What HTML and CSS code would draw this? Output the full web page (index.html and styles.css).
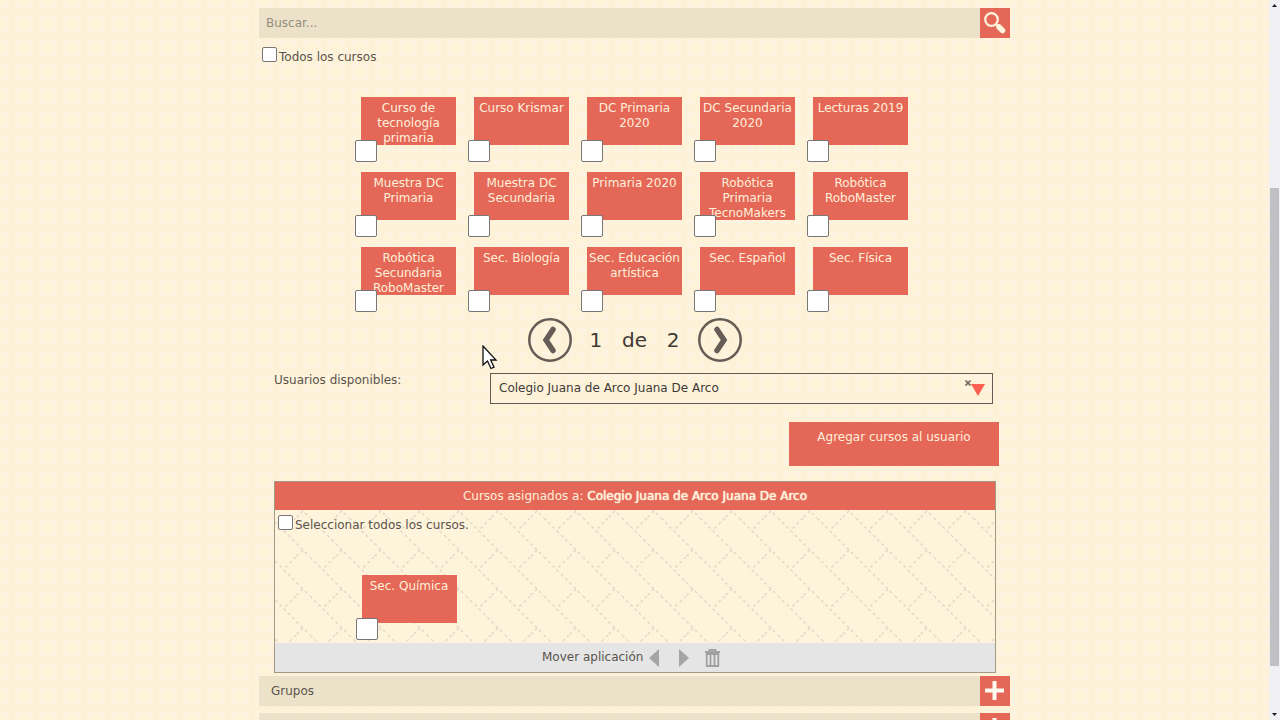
FILE: index.html
```html
<!DOCTYPE html>
<html lang="es">
<head>
<meta charset="utf-8">
<title>Cursos</title>
<link rel="stylesheet" href="styles.css">
</head>
<body>
<main class="page">
  <div class="content">
    <form class="bar search">
      <input class="search-input" type="text" placeholder="Buscar..." aria-label="Buscar">
      <button class="square" type="button" aria-label="Buscar">
        <svg width="30" height="30" viewBox="0 0 30 30"><circle cx="11.500" cy="11.500" r="6.300" fill="none" stroke="#fff4dc" stroke-width="2.200"/><path d="M16 16l3 3" stroke="#fff4dc" stroke-width="2.200"/><path d="M19 19l3.500 3.500" stroke="#fff4dc" stroke-width="5.500" stroke-linecap="round"/></svg>
      </button>
    </form>
    <label class="check all"><input type="checkbox" class="box">Todos los cursos</label>

    <div class="courses">
      <label class="course">Curso de tecnología primaria<input type="checkbox" class="box big"></label>
      <label class="course">Curso Krismar<input type="checkbox" class="box big"></label>
      <label class="course">DC Primaria 2020<input type="checkbox" class="box big"></label>
      <label class="course">DC Secundaria 2020<input type="checkbox" class="box big"></label>
      <label class="course">Lecturas 2019<input type="checkbox" class="box big"></label>
      <label class="course">Muestra DC Primaria<input type="checkbox" class="box big"></label>
      <label class="course">Muestra DC Secundaria<input type="checkbox" class="box big"></label>
      <label class="course">Primaria 2020<input type="checkbox" class="box big"></label>
      <label class="course">Robótica Primaria TecnoMakers<input type="checkbox" class="box big"></label>
      <label class="course">Robótica RoboMaster<input type="checkbox" class="box big"></label>
      <label class="course">Robótica Secundaria RoboMaster<input type="checkbox" class="box big"></label>
      <label class="course">Sec. Biología<input type="checkbox" class="box big"></label>
      <label class="course">Sec. Educación artística<input type="checkbox" class="box big"></label>
      <label class="course">Sec. Español<input type="checkbox" class="box big"></label>
      <label class="course">Sec. Física<input type="checkbox" class="box big"></label>
    </div>

    <nav class="pager" aria-label="Páginas">
      <button type="button" class="round" aria-label="Anterior">
        <svg width="44" height="44" viewBox="0 0 44 44" fill="none" stroke="#655c56"><circle cx="22" cy="22" r="20.700" stroke-width="2.500"/><path d="M25 11.500L18 22l7 10.500" stroke-width="5.500" stroke-linecap="round"/></svg>
      </button>
      <div class="pages"><span>1</span><span>de</span><span>2</span></div>
      <button type="button" class="round" aria-label="Siguiente">
        <svg width="44" height="44" viewBox="0 0 44 44" fill="none" stroke="#655c56"><circle cx="22" cy="22" r="20.700" stroke-width="2.500"/><path d="M19 11.500L26 22l-7 10.500" stroke-width="5.500" stroke-linecap="round"/></svg>
      </button>
    </nav>

    <div class="user-row">
      <label for="user">Usuarios disponibles:</label>
      <div class="select-wrap">
        <select id="user"><option>Colegio Juana de Arco Juana De Arco</option></select>
        <button type="button" class="clear" aria-label="Quitar"><svg width="6" height="6" viewBox="0 0 6 6"><path d="M.5 .5l5 5M5.500 .5l-5 5" stroke="#766d63" stroke-width="1.700"/></svg></button>
        <svg class="caret" width="14" height="12" viewBox="0 0 14 12"><path d="M0 0h14L7 12z" fill="#fb6050"/></svg>
      </div>
    </div>

    <button type="button" class="add">Agregar cursos al usuario</button>

    <section class="panel">
      <h2 class="panel-head">Cursos asignados a: <span class="strong">Colegio Juana de Arco Juana De Arco</span></h2>
      <div class="panel-body">
        <svg class="weave" width="100%" height="100%" aria-hidden="true">
          <defs><pattern id="weave" width="39" height="39" x="35" y="8" patternUnits="userSpaceOnUse"><path d="M0 0L39 39M32 32L25 39M25 0L12 13" fill="none" stroke="#e2d7c2" stroke-width="1.400" stroke-dasharray="3 3"/></pattern></defs>
          <rect width="100%" height="100%" fill="url(#weave)"/>
        </svg>
        <label class="check"><input type="checkbox" class="box">Seleccionar todos los cursos.</label>
        <div class="courses assigned">
          <label class="course">Sec. Química<input type="checkbox" class="box big"></label>
        </div>
      </div>
      <div class="panel-foot">
        <span>Mover aplicación</span>
        <button type="button" aria-label="Mover a la izquierda"><svg width="10" height="18" viewBox="0 0 10 18"><path d="M10 0v18L0 9z" fill="#a5a5a5"/></svg></button>
        <button type="button" aria-label="Mover a la derecha"><svg width="10" height="18" viewBox="0 0 10 18"><path d="M0 0v18l10-9z" fill="#a5a5a5"/></svg></button>
        <button type="button" aria-label="Eliminar"><svg width="15" height="18" viewBox="0 0 15 18" fill="none" stroke="#a0a0a0"><path d="M0 3h15M4.500 3V.8h6V3" stroke-width="1.800"/><path d="M1.700 5v12h11.600V5z" stroke-width="1.800"/><path d="M5.500 5v12M9.500 5v12" stroke-width="1.800"/></svg></button>
      </div>
    </section>

    <div class="bar group"><span>Grupos</span>
      <button class="square" type="button" aria-label="Abrir grupos"><svg width="30" height="30" viewBox="0 0 30 30"><path d="M14.500 5v19M5 14.500h19" stroke="#fffaf0" stroke-width="4"/></svg></button>
    </div>
    <div class="bar group"><span></span>
      <button class="square" type="button" aria-label="Abrir sección"><svg width="30" height="30" viewBox="0 0 30 30"><path d="M14.500 5v19M5 14.500h19" stroke="#fffaf0" stroke-width="4"/></svg></button>
    </div>
  </div>
</main>
<div class="scroll" aria-hidden="true">
  <svg width="10" height="10" viewBox="0 0 10 10"><path d="M2 7L4.500 4l2.500 3z" fill="#222"/></svg>
  <div class="track"><div class="thumb"></div></div>
  <svg width="10" height="10" viewBox="0 0 10 10"><path d="M2 3L4.500 6 7 3z" fill="#222"/></svg>
</div>
<svg class="pointer" width="16" height="26" viewBox="0 0 16 26" aria-hidden="true"><path d="M1 1v19l4.500-4 3.500 7.500 3-1.300L8.700 15H14z" fill="#fff" stroke="#111" stroke-width="1.300"/></svg>
</body>
</html>
```

FILE: styles.css
```css
* { box-sizing: border-box; }
body {
  margin: 0;
  height: 100vh;
  overflow: hidden;
  display: flex;
  font: 12px/15px "DejaVu Sans", sans-serif;
  color: #5b534d;
  background: #fef3da;
}
button, input, select { font: inherit; color: inherit; margin: 0; }
button { border: 0; padding: 0; background: none; }
svg { display: block; }
.page {
  flex: 1;
  background: radial-gradient(circle, #fdf3e1 2px, transparent 5px) 0 0 / 12px 12px, #fdf2d7;
}
.content { max-width: 751px; margin: 0 auto; padding-top: 8px; }
.bar { display: flex; height: 30px; background: #ece2ca; }
.search-input { flex: 1; min-width: 0; border: 0; padding: 0 7px; background: none; outline: 0; }
.search-input::placeholder { color: #958c7d; opacity: 1; }
.square { width: 30px; background: #e56757; }
.check { display: flex; align-items: center; gap: 2px; padding-left: 3px; }
.check .box { margin-bottom: 5px; }
.all { height: 20px; margin-top: 9px; }
.box {
  appearance: none;
  width: 15px;
  height: 15px;
  border: 1px solid #777;
  border-radius: 2px;
  background: #fff;
}
.courses {
  display: grid;
  grid-template-columns: repeat(5, 95px);
  grid-auto-rows: 48px;
  gap: 27px 18px;
  justify-content: center;
  margin-top: 30px;
}
.course {
  position: relative;
  padding-top: 4px;
  text-align: center;
  color: #fff0da;
  background: #e56757;
}
.big { position: absolute; left: -6px; bottom: -17px; width: 22px; height: 22px; }
.pager { display: flex; justify-content: center; align-items: center; gap: 18px; margin-top: 23px; }
.round { width: 44px; height: 44px; }
.pages { display: flex; justify-content: space-between; width: 90px; font-size: 20px; line-height: 24px; color: #403a35; }
.user-row { display: flex; justify-content: space-between; margin: 11px 17px 0 15px; }
.select-wrap { position: relative; width: 503px; }
.select-wrap select {
  appearance: none;
  display: block;
  width: 100%;
  height: 31px;
  padding: 0 8px;
  border: 1px solid #655c56;
  border-radius: 0;
  background: transparent;
  color: #403a35;
}
.clear { position: absolute; right: 22px; top: 7px; }
.caret { position: absolute; right: 8px; top: 11px; pointer-events: none; }
.add {
  display: block;
  width: 210px;
  height: 44px;
  margin: 18px 11px 15px auto;
  padding-bottom: 14px;
  color: #fff0da;
  background: #e56757;
}
.panel { margin: 0 14px 3px 15px; border: 1px solid #a29988; }
.panel-head { margin: 0; font: inherit; line-height: 28px; text-align: center; color: #fff0da; background: #e56757; }
.strong { text-shadow: 0 0 1px #fff0da, 0 0 1px #fff0da; }
.panel-body { position: relative; height: 133px; padding-top: 5px; background: #fef4dc; }
.weave { position: absolute; inset: 0; }
.panel-body .check { position: relative; height: 20px; }
.assigned { margin-top: 40px; }
.panel-foot { display: flex; align-items: center; height: 29px; background: #e5e5e5; padding-left: 267px; gap: 6px; }
.panel-foot button + button { margin-left: 14px; }
.panel-foot button + button + button { margin-left: 10px; }
.group { margin-bottom: 7px; align-items: center; justify-content: space-between; padding-left: 12px; }
.scroll { width: 11px; display: flex; flex-direction: column; padding-left: 1px; background: #f1f1f4; }
.track { flex: 1; }
.thumb { height: 68.300%; margin-top: 178px; width: 9px; background: #c1c1c4; }
.pointer { position: absolute; left: 482px; top: 345px; }
```
